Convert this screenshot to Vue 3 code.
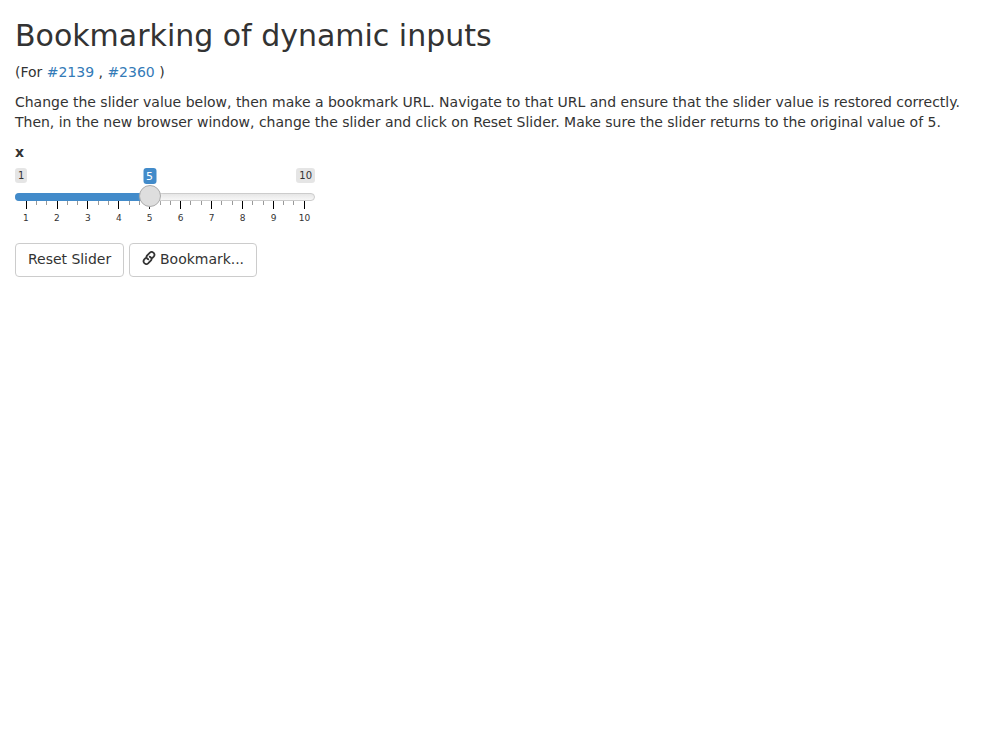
<script setup>
import { ref, computed } from 'vue'

const min = 1
const max = 10
const value = ref(5)
const labels = Array.from({ length: max - min + 1 }, (_, i) => min + i)
const ticks = Array.from({ length: (max - min) * 3 + 1 }, (_, i) => i % 3 === 0)
const handleLeft = computed(() => ((value.value - min) / (max - min)) * 278)
</script>

<template>
  <main class="container">
    <h2>Bookmarking of dynamic inputs</h2>
    <p>(For <a href="#">#2139</a> , <a href="#">#2360</a> )</p>
    <p>
      Change the slider value below, then make a bookmark URL. Navigate to that URL and ensure that the slider value is
      restored correctly. Then, in the new browser window, change the slider and click on Reset Slider. Make sure the
      slider returns to the original value of 5.
    </p>
    <div class="field">
      <label>x</label>
      <div class="slider">
        <div class="bounds">
          <span class="bound">{{ min }}</span>
          <span class="bound">{{ max }}</span>
        </div>
        <div class="track">
          <div class="fill" :style="{ width: handleLeft + 11 + 'px' }"></div>
        </div>
        <div class="ticks">
          <span v-for="(major, i) in ticks" :key="i" class="tick"><i :class="{ major }"></i></span>
        </div>
        <div class="labels">
          <span v-for="n in labels" :key="n">{{ n }}</span>
        </div>
        <div class="handle" :style="{ left: handleLeft + 'px' }">
          <span class="current">{{ value }}</span>
        </div>
      </div>
    </div>
    <div class="actions">
      <button type="button" @click="value = 5">Reset Slider</button>
      <button type="button">
        <svg class="icon" viewBox="0 0 14 14" fill="none" stroke="currentColor" stroke-width="1.8">
          <path d="M10 7.4 11.7 5.7Q13.2 3.9 11.9 2.2L11.3 1.6Q9.6 .2 7.9 1.7L5 4.6Q3.8 6.2 5.2 7.6Q6 8.4 7.1 8.3" />
          <path d="M4 6.6 2.3 8.3Q.8 10.1 2.1 11.8L2.7 12.4Q4.4 13.8 6.1 12.3L9 9.4Q10.2 7.8 8.8 6.4Q8 5.6 6.9 5.7" />
        </svg>
        Bookmark...
      </button>
    </div>
  </main>
</template>

<style>
body {
  background: #fff;
}
</style>

<style scoped>
.container {
  padding: 0 15px;
  font: 14px/20px "DejaVu Sans", sans-serif;
  letter-spacing: -0.012px;
  color: #333;
  display: flow-root;
}
h2 {
  margin: 19px 0 10px;
  font-size: 30px;
  font-weight: 500;
  line-height: 33px;
}
p {
  margin: 0 0 10px;
}
a {
  color: #337ab7;
  text-decoration: none;
}
.field {
  width: 300px;
}
label {
  display: block;
  margin-bottom: 6px;
  font-weight: 700;
}
.slider {
  position: relative;
  height: 60px;
}
.bounds {
  display: flex;
  justify-content: space-between;
  height: 25px;
}
.bound {
  height: 13px;
  padding: 1px 3px;
  border-radius: 3px;
  background: rgba(0, 0, 0, 0.1);
  font-size: 10px;
  line-height: 13px;
}
.track {
  box-sizing: border-box;
  height: 8px;
  border: 1px solid #ccc;
  border-radius: 8px;
  background: linear-gradient(#dedede -50%, #fff 150%);
}
.fill {
  height: 8px;
  margin: -1px;
  border-radius: 8px 0 0 8px;
  background: #428bca;
}
.ticks,
.labels {
  display: flex;
  justify-content: space-between;
  margin: 0 11.3px 0 10.7px;
}
.labels {
  margin: 0 10.5px 0 10.9px;
}
.ticks {
  height: 8px;
}
.tick {
  width: 0;
}
.tick i {
  display: block;
  width: 1px;
  height: 4px;
  background: #999;
}
.tick i.major {
  height: 8px;
  background: #000;
}
.labels span {
  display: flex;
  justify-content: center;
  width: 0;
  font-size: 9px;
  line-height: 18px;
}
.handle {
  position: absolute;
  top: 17px;
  box-sizing: border-box;
  width: 22px;
  height: 22px;
  border: 1px solid #ababab;
  border-radius: 50%;
  background: #dedede;
  box-shadow: 1px 1px 3px rgba(255, 255, 255, 0.3);
}
.current {
  position: absolute;
  bottom: 22px;
  left: 50%;
  transform: translateX(-50%);
  height: 14px;
  padding: 1px 3px;
  border-radius: 3px;
  background: #428bca;
  color: #fff;
  font-size: 11px;
  line-height: 15px;
}
.actions {
  display: flex;
  gap: 4.5px;
  margin-top: 15px;
}
button {
  padding: 5px 12px 7px;
  border: 1px solid #ccc;
  border-radius: 4px;
  background: #fff;
  color: #333;
  font: 14px/20px "DejaVu Sans", sans-serif;
  letter-spacing: -0.03px;
}
.icon {
  width: 14px;
  height: 14px;
  vertical-align: -1px;
}
</style>
